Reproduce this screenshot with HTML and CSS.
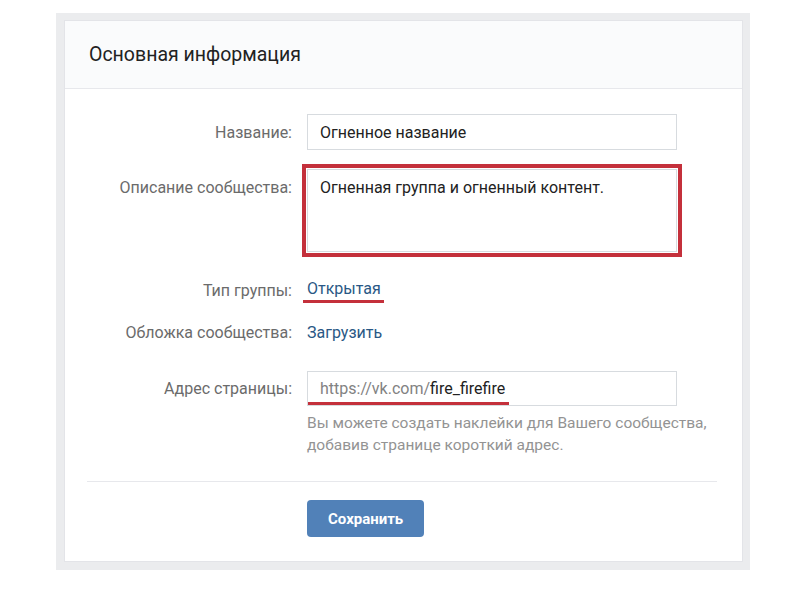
FILE: index.html
```html
<!DOCTYPE html>
<html lang="ru">
<head>
    <meta charset="UTF-8">
    <meta name="viewport" content="width=device-width, initial-scale=1.0">
    <title>Основная информация</title>
    <link rel="stylesheet" href="styles.css">
</head>
<body>
    <div class="frame">
        <div class="card">
            <div class="card-header">Основная информация</div>

            <div class="card-body">
                <div class="row row-name">
                    <div class="label">Название:</div>
                    <div class="field input">Огненное название</div>
                </div>

                <!-- описание выделено красной рамкой -->
                <div class="row row-desc">
                    <div class="label">Описание сообщества:</div>
                    <div class="field textarea">Огненная группа и огненный контент.</div>
                </div>

                <div class="row row-type">
                    <div class="label">Тип группы:</div>
                    <div class="field"><span class="link marked">Открытая</span></div>
                </div>

                <div class="row row-cover">
                    <div class="label">Обложка сообщества:</div>
                    <div class="field"><span class="link">Загрузить</span></div>
                </div>

                <div class="row row-address">
                    <div class="label">Адрес страницы:</div>
                    <div class="field input address">
                        <span class="address-text"><span class="prefix">https://vk.com/</span>fire_firefire</span>
                    </div>
                </div>

                <div class="row row-hint">
                    <div class="label"></div>
                    <div class="field hint">Вы можете создать наклейки для Вашего сообщества, добавив странице короткий адрес.</div>
                </div>

                <div class="divider"></div>

                <div class="row row-button">
                    <div class="label"></div>
                    <div class="field"><button class="btn">Сохранить</button></div>
                </div>
            </div>
        </div>
    </div>
</body>
</html>
```

FILE: styles.css
```css
body {
    margin: 0;
    background-color: #fff;
    font-family: Roboto, "Open Sans", Arial, sans-serif;
}

.frame {
    margin: 13px 0 0 56px;
    width: 679px;
    padding: 7px 7px 8px 8px;
    background-color: #ebecee;
}

.card {
    background-color: #fff;
    border: 1px solid #e3e4e8;
}

.card-header {
    height: 67px;
    display: flex;
    align-items: center;
    padding-left: 24px;
    background-color: #fafbfc;
    border-bottom: 1px solid #e7e8ec;
    font-size: 19.5px;
    color: #222;
}

.card-body {
    padding: 25px 25px 24px 24px;
}

.row {
    display: flex;
    align-items: center;
}

.label {
    width: 203px;
    flex: none;
    text-align: right;
    margin-right: 15px;
    font-size: 16px;
    color: #6b6b6b;
}

.field {
    width: 370px;
    font-size: 16px;
    color: #222;
}

.input {
    box-sizing: border-box;
    height: 36px;
    display: flex;
    align-items: center;
    padding-left: 12px;
    border: 1px solid #d7dbdf;
}

.row-desc {
    margin-top: 19px;
    align-items: flex-start;
}

.row-desc .label {
    padding-top: 9px;
}

.textarea {
    box-sizing: border-box;
    height: 83px;
    padding: 8px 12px;
    border: 1px solid #d7dbdf;
    outline: 4px solid #c4303b;
    outline-offset: 1px;
}

.row-type {
    margin-top: 27px;
    line-height: 20px;
}

.row-cover {
    margin-top: 20px;
    line-height: 20px;
}

.link {
    color: #2a5885;
}

.marked {
    display: inline-block;
    margin-left: -4px;
    padding: 0 3px 1px 4px;
    border-bottom: 3px solid #c4303b;
}

.row-address {
    margin-top: 28px;
}

.address {
    height: 35px;
    align-items: stretch;
    padding-left: 0;
}

.address-text {
    display: flex;
    align-items: center;
    padding: 2px 4px 0 12px;
    border-bottom: 3px solid #c4303b;
}

.prefix {
    color: #828282;
}

.row-hint {
    margin-top: 6px;
}

.hint {
    width: 410px;
    flex: none;
    font-size: 15.5px;
    line-height: 22px;
    color: #939393;
}

.divider {
    margin: 25px 0 0 -2px;
    height: 1px;
    background-color: #e7e8ec;
}

.row-button {
    margin-top: 18px;
}

.btn {
    height: 37px;
    padding: 0 21px;
    border: none;
    border-radius: 4px;
    background-color: #5181b8;
    color: #fff;
    font-family: Roboto, "Open Sans", Arial, sans-serif;
    font-size: 15px;
    font-weight: bold;
}
```
